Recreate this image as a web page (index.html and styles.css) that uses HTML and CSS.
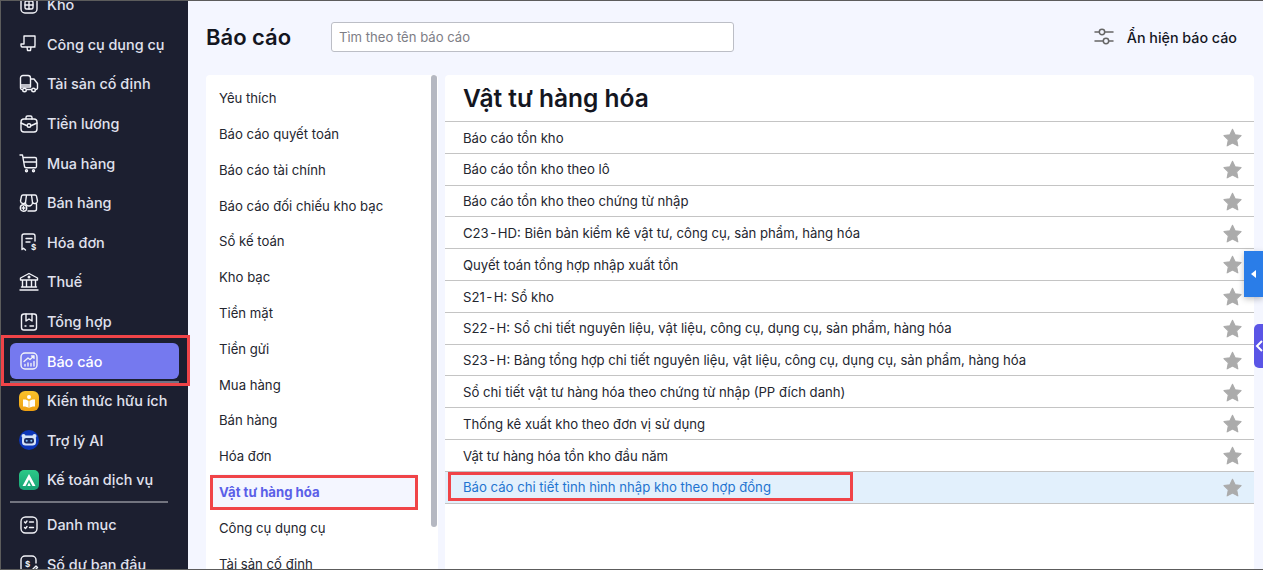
FILE: index.html
```html
<!DOCTYPE html>
<html lang="vi">
<head>
<meta charset="utf-8">
<title>Báo cáo</title>
<link rel="stylesheet" href="styles.css">
</head>
<body>
<div class="app">
  <aside class="sidebar">
    <nav class="nav">
      <a class="nav-item"><svg class="ico" viewBox="0 0 20 20"><rect x="2" y="2" width="16" height="16" rx="4"/><rect x="6" y="6" width="8" height="8" rx="1.5"/><path d="M10 6v8M6 10h8"/></svg><span>Kho</span></a>
      <a class="nav-item"><svg class="ico" viewBox="0 0 20 20"><path d="M5 2h11v9.500a1.500 1.500 0 0 1-1.500 1.500H12l-.5 3.500H8.500L8 13H3.500A1.500 1.500 0 0 1 2 11.500V10h3zM5 2v8M3 13h13"/></svg><span>Công cụ dụng cụ</span></a>
      <a class="nav-item"><svg class="ico" viewBox="0 0 20 20"><path d="M3 15.500A1.500 1.500 0 0 1 1.500 14V4A2.500 2.500 0 0 1 4 1.500h5A2.500 2.500 0 0 1 11.500 4v9h-9M12 5h3l3.500 4.500V14a1.500 1.500 0 0 1-1.500 1.500M1.500 11h10M8 15.500h4"/><circle cx="5.500" cy="16" r="1.800"/><circle cx="14.500" cy="16" r="1.800"/></svg><span>Tài sản cố định</span></a>
      <a class="nav-item"><svg class="ico" viewBox="0 0 20 20"><rect x="2" y="5" width="16" height="13" rx="3"/><path d="M7 5V3.500A1.500 1.500 0 0 1 8.500 2h3A1.500 1.500 0 0 1 13 3.500V5M2 9l5.500 2.500M18 9l-5.500 2.500"/><circle cx="10" cy="11.500" r="1.800"/></svg><span>Tiền lương</span></a>
      <a class="nav-item"><svg class="ico" viewBox="0 0 20 20"><path d="M1 2h2.500l2 11.500a1.500 1.500 0 0 0 1.500 1.200h8.500A1.500 1.500 0 0 0 17.500 13V6a1.500 1.500 0 0 0-1.500-1.500H4M5 9h12.500"/><circle cx="7.500" cy="17.800" r="1"/><circle cx="14.500" cy="17.800" r="1"/></svg><span>Mua hàng</span></a>
      <a class="nav-item"><svg class="ico" viewBox="0 0 20 20"><path d="M4 2h12a1.500 1.500 0 0 1 1.500 1.200L18.500 8a2.800 2.800 0 0 1-5 1.500 3.200 3.200 0 0 1-7 0A2.800 2.800 0 0 1 1.500 8l1-4.800A1.500 1.500 0 0 1 4 2zM7.500 2 6.500 9.500M12.500 2l1 7.500M17.500 11v5a2 2 0 0 1-2 2H9"/><circle cx="4.500" cy="15" r="3.200"/><path d="M4.500 13.500v3M3 15h3"/></svg><span>Bán hàng</span></a>
      <a class="nav-item"><svg class="ico" viewBox="0 0 20 20"><path d="M6.500 18 4.500 16.300 3 17.500V4a2 2 0 0 1 2-2h9a2 2 0 0 1 2 2v5M7 6.500h6M7 10h4"/><text class="ico-text" x="12" y="18">$</text></svg><span>Hóa đơn</span></a>
      <a class="nav-item"><svg class="ico" viewBox="0 0 20 20"><path d="M10 1.500 1.500 6v2h17V6zM3.500 8v7M7.500 8v7M12.500 8v7M16.500 8v7M2.500 15h15M1 18h18"/><circle cx="10" cy="5" r=".8"/></svg><span>Thuế</span></a>
      <a class="nav-item"><svg class="ico" viewBox="0 0 20 20"><rect x="2.500" y="2" width="15" height="16" rx="2.500"/><path d="M7 2v7l3-2 3 2V2M11 14h3.500M6 14h1"/></svg><span>Tổng hợp</span></a>
      <a class="nav-item active"><svg class="ico" viewBox="0 0 20 20"><rect x="2" y="2" width="16" height="16" rx="4"/><path d="M5 10.500 9 7l2 1.500L15 5M12.500 5H15v2.500M6 15v-1.500M9 15v-3M12 15v-2.500M15 15v-4.500"/></svg><span>Báo cáo</span></a>
      <a class="nav-item"><svg class="badge" viewBox="0 0 20 20"><defs><linearGradient id="gy" x1="0" y1="0" x2="0" y2="1"><stop offset="0" stop-color="#f9c22c"/><stop offset="1" stop-color="#ee9f10"/></linearGradient></defs><rect width="20" height="20" rx="6" fill="url(#gy)"/><path d="M4 8.500c2.200-.3 4.500.2 5.600 1.500v7c-1.300-1.200-3.500-1.700-5.600-1.500zM16 8.500c-2.200-.3-4.500.2-5.600 1.500v7c1.300-1.200 3.500-1.700 5.600-1.500z" fill="#fff"/><circle cx="10" cy="6" r="2" fill="#fff"/></svg><span>Kiến thức hữu ích</span></a>
      <a class="nav-item"><svg class="badge" viewBox="0 0 20 20"><circle cx="10" cy="10" r="10" fill="#0d36b8"/><circle cx="4.500" cy="6" r="2" fill="#d5e2f8"/><circle cx="15.500" cy="6" r="2" fill="#d5e2f8"/><rect x="3" y="5.500" width="14" height="10" rx="3.500" fill="#d5e2f8"/><rect x="5" y="8" width="10" height="5.500" rx="2.200" fill="#1d2a5c"/><circle cx="7.700" cy="10.700" r="1" fill="#7fc6ff"/><circle cx="12.300" cy="10.700" r="1" fill="#7fc6ff"/></svg><span>Trợ lý AI</span></a>
      <a class="nav-item"><svg class="badge" viewBox="0 0 20 20"><defs><linearGradient id="gg" x1="0" y1="0" x2="0" y2="1"><stop offset="0" stop-color="#2cc987"/><stop offset="1" stop-color="#17a276"/></linearGradient></defs><rect width="20" height="20" rx="5" fill="url(#gg)"/><path d="M10 4 3.500 16h3L10 9.500 13.500 16h3zM10 12.500 8.300 16h3.400z" fill="#fff"/></svg><span>Kế toán dịch vụ</span></a>
      <hr class="nav-sep">
      <a class="nav-item"><svg class="ico" viewBox="0 0 20 20"><rect x="2" y="2" width="16" height="16" rx="4.500"/><path d="M5.500 7 6.500 8 8 6M5.500 12.500l1 1L8 11.500M10.500 7h4M10.500 12.500h4"/></svg><span>Danh mục</span></a>
      <a class="nav-item"><svg class="ico" viewBox="0 0 20 20"><path d="M17 9V6a4 4 0 0 0-4-4H6a4 4 0 0 0-4 4v8a4 4 0 0 0 4 4h4"/><text class="ico-text" x="6" y="13">$</text><path d="m12 17 5-5 1.500 1.500-5 5H12z"/></svg><span>Số dư ban đầu</span></a>
    </nav>
  </aside>
  <main class="main">
    <header class="topbar">
      <h1 class="page-title">Báo cáo</h1>
      <input class="search" type="text" placeholder="Tìm theo tên báo cáo">
      <button class="toggle" type="button">
        <svg class="toggle-ico" viewBox="0 0 20 20"><circle cx="8" cy="5" r="2.700"/><circle cx="12" cy="14" r="2.700"/><path d="M1 5h4.300M10.700 5H19M1 14h8.300M14.700 14H19"/></svg>
        <span>Ẩn hiện báo cáo</span>
      </button>
    </header>
    <div class="panels">
      <div class="cats">
        <ul class="cat-list">
          <li class="cat">Yêu thích</li>
          <li class="cat">Báo cáo quyết toán</li>
          <li class="cat">Báo cáo tài chính</li>
          <li class="cat">Báo cáo đối chiếu kho bạc</li>
          <li class="cat">Sổ kế toán</li>
          <li class="cat">Kho bạc</li>
          <li class="cat">Tiền mặt</li>
          <li class="cat">Tiền gửi</li>
          <li class="cat">Mua hàng</li>
          <li class="cat">Bán hàng</li>
          <li class="cat">Hóa đơn</li>
          <li class="cat selected">Vật tư hàng hóa<i class="mark mark-cat"></i></li>
          <li class="cat">Công cụ dụng cụ</li>
          <li class="cat">Tài sản cố định</li>
        </ul>
        <div class="scrollbar"></div>
      </div>
      <section class="reports">
        <h2 class="reports-title">Vật tư hàng hóa</h2>
        <ul class="report-list">
          <li class="report"><span>Báo cáo tồn kho</span><svg class="star" viewBox="0 0 24 24"><path d="M12 2.500l3 6.400 6.800.9-5 4.800 1.300 7-6.100-3.400-6.100 3.400 1.300-7-5-4.800 6.800-.9z"/></svg></li>
          <li class="report"><span>Báo cáo tồn kho theo lô</span><svg class="star" viewBox="0 0 24 24"><path d="M12 2.500l3 6.400 6.800.9-5 4.800 1.300 7-6.100-3.400-6.100 3.400 1.300-7-5-4.800 6.800-.9z"/></svg></li>
          <li class="report"><span>Báo cáo tồn kho theo chứng từ nhập</span><svg class="star" viewBox="0 0 24 24"><path d="M12 2.500l3 6.400 6.800.9-5 4.800 1.300 7-6.100-3.400-6.100 3.400 1.300-7-5-4.800 6.800-.9z"/></svg></li>
          <li class="report"><span>C23<span class="hy">-</span>HD: Biên bản kiểm kê vật tư, công cụ, sản phẩm, hàng hóa</span><svg class="star" viewBox="0 0 24 24"><path d="M12 2.500l3 6.400 6.800.9-5 4.800 1.300 7-6.100-3.400-6.100 3.400 1.300-7-5-4.800 6.800-.9z"/></svg></li>
          <li class="report"><span>Quyết toán tổng hợp nhập xuất tồn</span><svg class="star" viewBox="0 0 24 24"><path d="M12 2.500l3 6.400 6.800.9-5 4.800 1.300 7-6.100-3.400-6.100 3.400 1.300-7-5-4.800 6.800-.9z"/></svg></li>
          <li class="report"><span>S21<span class="hy">-</span>H: Sổ kho</span><svg class="star" viewBox="0 0 24 24"><path d="M12 2.500l3 6.400 6.800.9-5 4.800 1.300 7-6.100-3.400-6.100 3.400 1.300-7-5-4.800 6.800-.9z"/></svg></li>
          <li class="report"><span>S22<span class="hy">-</span>H: Sổ chi tiết nguyên liệu, vật liệu, công cụ, dụng cụ, sản phẩm, hàng hóa</span><svg class="star" viewBox="0 0 24 24"><path d="M12 2.500l3 6.400 6.800.9-5 4.800 1.300 7-6.100-3.400-6.100 3.400 1.300-7-5-4.800 6.800-.9z"/></svg></li>
          <li class="report"><span>S23<span class="hy">-</span>H: Bảng tổng hợp chi tiết nguyên liệu, vật liệu, công cụ, dụng cụ, sản phẩm, hàng hóa</span><svg class="star" viewBox="0 0 24 24"><path d="M12 2.500l3 6.400 6.800.9-5 4.800 1.300 7-6.100-3.400-6.100 3.400 1.300-7-5-4.800 6.800-.9z"/></svg></li>
          <li class="report"><span>Sổ chi tiết vật tư hàng hóa theo chứng từ nhập (PP đích danh)</span><svg class="star" viewBox="0 0 24 24"><path d="M12 2.500l3 6.400 6.800.9-5 4.800 1.300 7-6.100-3.400-6.100 3.400 1.300-7-5-4.800 6.800-.9z"/></svg></li>
          <li class="report"><span>Thống kê xuất kho theo đơn vị sử dụng</span><svg class="star" viewBox="0 0 24 24"><path d="M12 2.500l3 6.400 6.800.9-5 4.800 1.300 7-6.100-3.400-6.100 3.400 1.300-7-5-4.800 6.800-.9z"/></svg></li>
          <li class="report"><span>Vật tư hàng hóa tồn kho đầu năm</span><svg class="star" viewBox="0 0 24 24"><path d="M12 2.500l3 6.400 6.800.9-5 4.800 1.300 7-6.100-3.400-6.100 3.400 1.300-7-5-4.800 6.800-.9z"/></svg></li>
          <li class="report current"><span>Báo cáo chi tiết tình hình nhập kho theo hợp đồng</span><svg class="star" viewBox="0 0 24 24"><path d="M12 2.500l3 6.400 6.800.9-5 4.800 1.300 7-6.100-3.400-6.100 3.400 1.300-7-5-4.800 6.800-.9z"/></svg><i class="mark mark-report"></i></li>
        </ul>
      </section>
    </div>
    <div class="tab-blue"><i class="tri"></i></div>
    <div class="tab-purple"><svg viewBox="0 0 10 14"><path d="M8 2 3 7l5 5"/></svg></div>
  </main>
  <i class="mark mark-nav"></i>
</div>
</body>
</html>
```
FILE: styles.css
```css
* { box-sizing: border-box; }
html, body { margin: 0; padding: 0; }
body { width: 1263px; height: 570px; overflow: hidden; font-family: Inter, "Noto Sans", sans-serif; }
.app { display: flex; width: 1263px; height: 570px; overflow: hidden; position: relative; border: 1px solid #5c5c5c; border-right: 0; background: #f4f6ff; }

.sidebar { width: 187px; flex: none; background: #1c1f30; overflow: hidden; }
.nav { margin-top: -16px; padding: 0 9px 0 8px; display: flex; flex-direction: column; }
.nav-item { position: relative; display: flex; align-items: center; gap: 8.500px; height: 39.6px; padding-left: 9.500px; font-size: 14.400px; font-weight: 500; color: #e0e2ee; flex: none; }
.ico { width: 20px; height: 20px; flex: none; fill: none; stroke: #f2f3f8; stroke-width: 1.4; stroke-linecap: round; stroke-linejoin: round; }
.ico-text { font-size: 8px; font-weight: 700; fill: #f2f3f8; stroke: none; }
.badge { width: 20px; height: 20px; flex: none; }
.nav-item.active { height: 36px; margin: 2px 0 1.600px 1px; padding-left: 8.500px; border-radius: 6px; background: #7579ef; color: #fff; }
.nav-item.active::after { content: ""; position: absolute; left: 0; right: 0; top: 38px; height: 2px; background: #6f7284; }
.nav-sep { width: 158px; height: 2px; margin: 1px 0 2px 1px; border: 0; background: #72747f; flex: none; }

.main { position: relative; flex: 1; min-width: 0; padding: 0 9px 0 18px; display: flex; flex-direction: column; }
.topbar { height: 74px; flex: none; display: flex; align-items: center; padding-bottom: 2px; }
.page-title { width: 125px; margin: 0; font-size: 22px; font-weight: 600; color: #14161f; }
.search { width: 403px; height: 30px; padding: 0 7px; border: 1px solid #bcbec6; border-radius: 3px; background: #fff; font: 13.100px Inter, sans-serif; color: #333; }
.search::placeholder { color: #7d7d85; opacity: 1; }
.toggle { display: flex; align-items: center; gap: 13px; margin-left: auto; margin-right: 17px; padding: 0; border: 0; background: none; font: 500 14.300px Inter, sans-serif; color: #14161f; }
.toggle-ico { width: 20px; height: 20px; fill: none; stroke: #666; stroke-width: 1.500; stroke-linecap: round; }

.panels { flex: 1; min-height: 0; display: flex; gap: 7px; }
.cats { position: relative; width: 232px; flex: none; background: #fff; border-radius: 4px 4px 0 0; overflow: hidden; }
.cat-list { list-style: none; margin: 0; padding: 5.300px 21px 0 5px; }
.cat { position: relative; display: flex; align-items: center; height: 35.800px; padding-left: 8px; font-size: 13.150px; color: #24262f; }
.cat.selected { background: #f4f6ff; font-weight: 700; color: #5a5fe8; }
.scrollbar { position: absolute; top: 0; right: 1px; width: 6px; height: 452px; border-radius: 3px; background: #b5b8c2; }

.reports { flex: 1; min-width: 0; background: #fff; border-radius: 4px 4px 0 0; overflow: hidden; }
.reports-title { height: 47px; margin: 0; padding-left: 18px; display: flex; align-items: center; font-size: 24.500px; font-weight: 600; color: #14161f; border-bottom: 1px solid #c4c4c4; }
.report-list { list-style: none; margin: 0; padding: 0; }
.report { position: relative; display: flex; align-items: center; justify-content: space-between; height: 31.800px; padding: .5px 11.500px 0 18px; font-size: 13.150px; color: #24262f; border-bottom: 1px solid #c4c4c4; }
.report.current { background: #e2f0fc; color: #1f74d0; }
.hy { padding: 0 1.500px; }
.star { width: 21px; height: 21px; fill: #ababab; stroke: #ababab; stroke-width: 1.200; stroke-linejoin: round; flex: none; }

.mark { position: absolute; border: 3px solid #f04448; pointer-events: none; z-index: 2; }
.mark-nav { left: 0; top: 334px; width: 189px; height: 51px; }
.mark-cat { left: -1px; top: 1px; width: 208px; height: 35px; }
.mark-report { left: 3px; top: 0; width: 405px; height: 29px; }

.tab-blue { position: absolute; right: 0; top: 250px; width: 19px; height: 46px; background: #2a7de8; display: flex; align-items: center; justify-content: center; box-shadow: 0 2px 6px rgba(0,0,0,.25); }
.tri { width: 0; height: 0; border: 4px solid transparent; border-right: 5px solid #fff; border-left: 0; }
.tab-purple { position: absolute; right: 0; top: 323px; width: 9px; height: 44px; border-radius: 5px 0 0 5px; background: #5a55e6; display: flex; align-items: center; overflow: hidden; }
.tab-purple svg { width: 10px; height: 14px; flex: none; fill: none; stroke: #fff; stroke-width: 2; }
```
